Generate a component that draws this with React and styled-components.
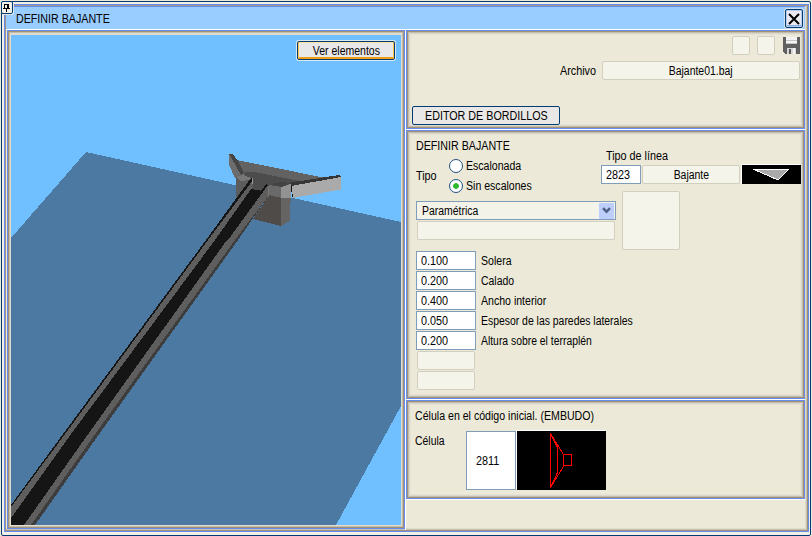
import React from "react";
import styled, { createGlobalStyle } from "styled-components";

const GlobalStyle = createGlobalStyle`
  * { box-sizing: border-box; }
  body {
    margin: 0;
    background: #ece9d8;
    font-family: "Liberation Sans", Arial, sans-serif;
    font-size: 12px;
    color: #000;
  }
`;

const Desktop = styled.div`
  width: 812px;
  height: 536px;
  padding: 1px 1px 0 1px;
  background: #ece9d8;
  position: relative;
`;

const PinButton = styled.div`
  position: absolute;
  left: 1px;
  top: 1px;
  width: 12px;
  height: 13px;
  border: 1px solid #003c74;
  border-radius: 2px;
  background: #f4f2e8;
  box-shadow: 1px 1px 0 #dfe6ea;
  display: flex;
  svg { display: block; }
`;

const Window = styled.div`
  width: 810px;
  height: 535px;
  border: 1px solid #003c74;
  border-radius: 2px;
  background: #f1efe6;
  padding: 2px 1px 3px 2px;
`;

const Frame = styled.div`
  width: 805px;
  height: 528px;
  border: 1px solid #668cee;
  background: #ece9d8;
  box-shadow: inset 1px 1px 0 #a09488, inset -1px -1px 0 #a09078,
    inset -2px -2px 0 #c8c1af, inset -3px -3px 0 #dedbce;
  padding: 1px 2px 0 1px;
  display: flex;
  flex-direction: column;
`;

const TitleBar = styled.header`
  width: 799px;
  height: 24px;
  border-top: 1px solid #668cee;
  border-bottom: 1px solid #fff;
  background: #99ccff;
  display: flex;
  align-items: center;
  justify-content: space-between;
  padding: 1px 2px 0 10px;
`;

const Label = styled.span`
  display: inline-block;
  white-space: nowrap;
  line-height: 14px;
  transform: scaleX(${(p) => p.$sx || 0.9});
  transform-origin: ${(p) => p.$origin || "left"} center;
`;

const CloseButton = styled.button`
  width: 18px;
  height: 19px;
  padding: 0;
  border: 1px solid #003c74;
  border-radius: 2px;
  background: #eceaf0;
  box-shadow: inset 0 0 0 1px #b8cdf2, inset -1px -2px 0 #8aaae5, 0 0 0 1px #d5e0e8;
  display: flex;
  align-items: center;
  justify-content: center;
`;

const Body = styled.main`
  display: flex;
  width: 799px;
  height: 500px;
`;

const Bevel = styled.section`
  border: 1px solid #668cee;
  box-shadow: inset 0 0 0 1px #a09078, inset 0 0 0 2px #c4bdad,
    inset 0 0 0 3px #dad6ca, inset 0 0 0 4px #e5e2d6;
  background: #ece9d8;
`;

const Viewer = styled(Bevel)`
  width: 398px;
  height: 499px;
  margin-left: 1px;
  padding: 4px 3px 3px 3px;
  display: grid;
  background: #e0dcd0;
  box-shadow: inset 0 0 0 1px #a09078, inset 0 0 0 2px #c4bdad;
  > * { grid-area: 1 / 1; }
`;

const Scene = styled.svg`
  display: block;
  width: 390px;
  height: 490px;
`;

const ViewButton = styled.button`
  justify-self: end;
  align-self: start;
  margin: 6px 6px 0 0;
  width: 98px;
  height: 19px;
  padding: 0;
  border: 1px solid #003c74;
  border-radius: 2px;
  background: #e9e8e8;
  box-shadow: inset 1px 0 0 #ffc64b, inset -1px 0 0 #ffc64b, inset 0 1px 0 #ffe2a0,
    inset 0 -2px 0 #f09c12, 0 0 0 1px #dce8ee;
  font: inherit;
  line-height: 14px;
`;

const Side = styled.div`
  width: 400px;
  border-left: 1px solid #fff;
  display: flex;
  flex-direction: column;
  gap: 1px;
  background: linear-gradient(#fff, #fff) 0 0 / 399px 470px no-repeat;
`;

const FilePanel = styled(Bevel)`
  width: 399px;
  height: 99px;
  padding: 5px 4px 0 5px;
  display: flex;
  flex-direction: column;
`;

const Toolbar = styled.div`
  display: flex;
  justify-content: flex-end;
  gap: 7px;
  height: 25px;
`;

const Disabled = styled.div`
  width: ${(p) => p.$w}px;
  height: ${(p) => p.$h || 19}px;
  border: 1px solid #d3cfbf;
  border-radius: 2px;
  background: #f5f4ea;
  display: flex;
  align-items: center;
  justify-content: center;
  flex: none;
`;

const Floppy = styled.svg`
  display: block;
  margin: 1px 0 0 1px;
`;

const FileRow = styled.div`
  display: flex;
  justify-content: flex-end;
  align-items: center;
  gap: 6px;
`;

const EditorButton = styled.button`
  margin-top: 26px;
  width: 148px;
  height: 19px;
  border: 1px solid #003c74;
  border-radius: 2px;
  background: #e9e8e6;
  padding: 0 0 0 12px;
  text-align: left;
  font: inherit;
`;

const DefinePanel = styled(Bevel)`
  width: 399px;
  height: 269px;
  padding: 8px 2px 0 9px;
`;

const TopRow = styled.div`
  display: flex;
  height: 62px;
`;

const TypeBlock = styled.div`
  width: 185px;
`;

const TypeRow = styled.div`
  display: flex;
  align-items: center;
  height: 40px;
  margin-top: 3px;
`;

const TypeName = styled.div`
  width: 33px;
`;

const RadioLine = styled.div`
  display: flex;
  align-items: center;
  gap: 3px;
  height: 20px;
`;

const Radio = styled.span`
  width: 14px;
  height: 14px;
  border: 1px solid #1d5281;
  border-radius: 50%;
  background: ${(p) => p.$on ? "radial-gradient(circle, #2eb82e 0 2.5px, #fff 3.2px)" : "#fff"};
`;

const LineBlock = styled.div`
  padding-top: 10px;
`;

const LineTitle = styled.div`
  padding-left: 5px;
  height: 16px;
`;

const LineRow = styled.div`
  display: flex;
  gap: 1px;
`;

const Input = styled.div`
  width: ${(p) => p.$w}px;
  height: ${(p) => p.$h || 19}px;
  border: 1px solid #7f9db9;
  background: #fff;
  padding-left: ${(p) => p.$pad || 4}px;
  display: flex;
  align-items: center;
  flex: none;
`;

const Preview = styled.svg`
  display: block;
  background: #000;
  box-shadow: -1px -1px 0 #fff;
  margin-left: 1px;
`;

const MidRow = styled.div`
  display: flex;
  height: 50px;
`;

const SelectColumn = styled.div`
  width: 200px;
`;

const Select = styled.div`
  width: 200px;
  height: 19px;
  border: 1px solid #7f9db9;
  background: #f4f3ea;
  padding: 1px 1px 1px 5px;
  display: flex;
  justify-content: space-between;
  align-items: center;
`;

const Arrow = styled.span`
  width: 15px;
  height: 16px;
  background: #bccef9;
  border-radius: 1px;
  display: flex;
  align-items: center;
  justify-content: center;
`;

const SelectNote = styled.div`
  padding: 1px 0 0 1px;
`;

const Thumb = styled.div`
  margin: -10px 0 0 6px;
`;

const Fields = styled.div`
  display: grid;
  grid-template-columns: 60px auto;
  grid-auto-rows: 20px;
  column-gap: 5px;
`;

const EmptyField = styled.div`
  grid-column: 1;
  padding-left: 1px;
`;

const FieldLabel = styled.div`
  padding-top: 3px;
`;

const CellPanel = styled(Bevel)`
  width: 399px;
  height: 99px;
  padding: 8px 0 0 8px;
`;

const CellRow = styled.div`
  display: flex;
  margin-top: 8px;
`;

const CellName = styled.div`
  width: 51px;
  padding-top: 3px;
`;

const fields = [
  ["0.100", "Solera", 0.88],
  ["0.200", "Calado", 0.87],
  ["0.400", "Ancho interior", 0.88],
  ["0.050", "Espesor de las paredes laterales", 0.868],
  ["0.200", "Altura sobre el terraplén", 0.865],
];

function TerrainScene() {
  return (
    <Scene viewBox="11 35 390 490" shapeRendering="crispEdges">
      <rect x="11" y="35" width="390" height="490" fill="#70bfff" />
      <polygon points="86,152 401,222 401,406 336,525 11,525 11,238" fill="#4b79a1" />
      <polygon points="237,160 323,177.5 312,181 290,184 253,180 240,176" fill="#626262" />
      <polygon points="236,177 254,176 252,190 243,198 236,198" fill="#5c5c5c" />
      <polygon points="236,177 242,174 253,177 250,180 240,181" fill="#777" />
      <polygon points="245,172 254,172 300,181 290,184 272,185 267,188 262,191 250,190 253,179 244,175" fill="#4c4c4c" />
      <polygon points="268,184 282,186 281,226 253,219 268,197" fill="#4e4b49" />
      <polygon points="281,186 291,183 290,221 281,226" fill="#666462" />
      <polygon points="269,185 282,187 282,198 269,195" fill="#696969" />
      <polygon points="281,187 291,184 291,198 281,198" fill="#929292" />
      <polygon points="271,184 280,182 292,183 282,187" fill="#424242" />
      <polygon points="229,154 233,154 244,174 235,178 229,165" fill="#6c6c6c" />
      <polygon points="229,154 233,154 238,161 244,173 241,175 231,157" fill="#454545" />
      <polygon points="291,185 341,177 341,189.5 293,198" fill="#aaa" />
      <polygon points="291,182.5 339,175 341,177 291,186" fill="#363636" />
      <path d="M291.5 186v6M292.5 194v3" stroke="#111" />
      <polygon points="251,178 253,180 208,240 68,430 11,507 11,505 66,430 206,240" fill="#151515" />
      <polygon points="253,180 253,188 251,189 215,240 74,430 11,518 11,507 68,430 208,240" fill="#5e5e5e" />
      <polygon points="251,189 263,191 227,240 91,430 24,525 11,525 11,518 74,430 215,240" fill="#151515" />
      <polygon points="268,185 269,196 235,240 98,430 31,525 24,525 91,430 227,240 258,196" fill="#5e5e5e" />
      <polygon points="269,195 238,240 102,430 35,525 31,525 98,430 235,240" fill="#3d3d3d" />
      <polygon points="266,184 268,185 228,240 227,240" fill="#151515" />
      <path d="M252.5 178v6" stroke="#999" />
      <path d="M268.5 186v10" stroke="#777" />
    </Scene>
  );
}

export default function App() {
  return (
    <>
      <GlobalStyle />
      <Desktop>
        <Window>
          <Frame>
            <TitleBar>
              <Label $sx={0.89}>DEFINIR BAJANTE</Label>
              <CloseButton aria-label="Cerrar">
                <svg width="12" height="12" viewBox="0 0 12 12">
                  <path d="M1 1l10 10M11 1l-10 10" stroke="#000" strokeWidth="2" />
                </svg>
              </CloseButton>
            </TitleBar>
            <Body>
              <Viewer>
                <TerrainScene />
                <ViewButton><Label $origin="center" $sx={0.875}>Ver elementos</Label></ViewButton>
              </Viewer>
              <Side>
                <FilePanel>
                  <Toolbar>
                    <Disabled $w={18} />
                    <Disabled $w={18} />
                    <Floppy width="17" height="17" viewBox="0 0 17 17" shapeRendering="crispEdges">
                      <path d="M0 0h17v17H2l-2-2z" fill="#606060" />
                      <path d="M3 0h11v7H3z" fill="#f4f4f4" />
                      <path d="M3 3h11v1H3zM3 6h11v1H3z" fill="#c5c5c5" />
                      <path d="M4 11h9v6H4z" fill="#d5d5d5" />
                      <path d="M6 12h2v5H6z" fill="#555" />
                      <path d="M10 11h2v6h-2z" fill="#f5f5f5" />
                    </Floppy>
                  </Toolbar>
                  <FileRow>
                    <Label $origin="right" $sx={0.9}>Archivo</Label>
                    <Disabled $w={198}><Label $origin="center" $sx={0.87}>Bajante01.baj</Label></Disabled>
                  </FileRow>
                  <EditorButton><Label $sx={0.895}>EDITOR DE BORDILLOS</Label></EditorButton>
                </FilePanel>
                <DefinePanel>
                  <TopRow>
                    <TypeBlock>
                      <Label $sx={0.89}>DEFINIR BAJANTE</Label>
                      <TypeRow>
                        <TypeName><Label>Tipo</Label></TypeName>
                        <div>
                          <RadioLine><Radio /><Label $sx={0.88}>Escalonada</Label></RadioLine>
                          <RadioLine><Radio $on /><Label $sx={0.88}>Sin escalones</Label></RadioLine>
                        </div>
                      </TypeRow>
                    </TypeBlock>
                    <LineBlock>
                      <LineTitle><Label $sx={0.9}>Tipo de línea</Label></LineTitle>
                      <LineRow>
                        <Input $w={40}><Label>2823</Label></Input>
                        <Disabled $w={98}><Label $origin="center" $sx={0.87}>Bajante</Label></Disabled>
                        <Preview width="59" height="19" viewBox="0 0 59 19" shapeRendering="crispEdges">
                          <path d="M11 4h36L36 15z" fill="#aaa" stroke="#fff" />
                        </Preview>
                      </LineRow>
                    </LineBlock>
                  </TopRow>
                  <MidRow>
                    <SelectColumn>
                      <Select>
                        <Label $sx={0.87}>Paramétrica</Label>
                        <Arrow>
                          <svg width="9" height="7" viewBox="0 0 9 7">
                            <path d="M1 1.2l3.5 3.5L8 1.2" fill="none" stroke="#4d6185" strokeWidth="2.4" />
                          </svg>
                        </Arrow>
                      </Select>
                      <SelectNote><Disabled $w={198} /></SelectNote>
                    </SelectColumn>
                    <Thumb><Disabled $w={58} $h={59} /></Thumb>
                  </MidRow>
                  <Fields>
                    {fields.map(([value, name, sx]) => (
                      <React.Fragment key={name}>
                        <Input $w={60}><Label>{value}</Label></Input>
                        <FieldLabel><Label $sx={sx}>{name}</Label></FieldLabel>
                      </React.Fragment>
                    ))}
                    <EmptyField><Disabled $w={58} /></EmptyField>
                    <EmptyField><Disabled $w={58} /></EmptyField>
                  </Fields>
                </DefinePanel>
                <CellPanel>
                  <Label $sx={0.883}>Célula en el código inicial. (EMBUDO)</Label>
                  <CellRow>
                    <CellName><Label $sx={0.87}>Célula</Label></CellName>
                    <Input $w={50} $h={59} $pad={9}><Label>2811</Label></Input>
                    <Preview width="89" height="59" viewBox="517 431 89 59" shapeRendering="crispEdges">
                      <path d="M550.5 433.5v54M550.5 433.5l13 21v12l-13 21M550.5 433.5l7 14v25l-7 15M563.5 454.5h8v11h-8z" fill="none" stroke="#f00" />
                    </Preview>
                  </CellRow>
                </CellPanel>
              </Side>
            </Body>
          </Frame>
        </Window>
        <PinButton>
          <svg width="10" height="11" viewBox="2 2 10 11" shapeRendering="crispEdges">
            <path d="M4.5 4v4.5M4 4.5h5M8.5 4v5M7.5 4v5M3 8.5h7M6.5 8v4" stroke="#000" fill="none" />
          </svg>
        </PinButton>
      </Desktop>
    </>
  );
}
